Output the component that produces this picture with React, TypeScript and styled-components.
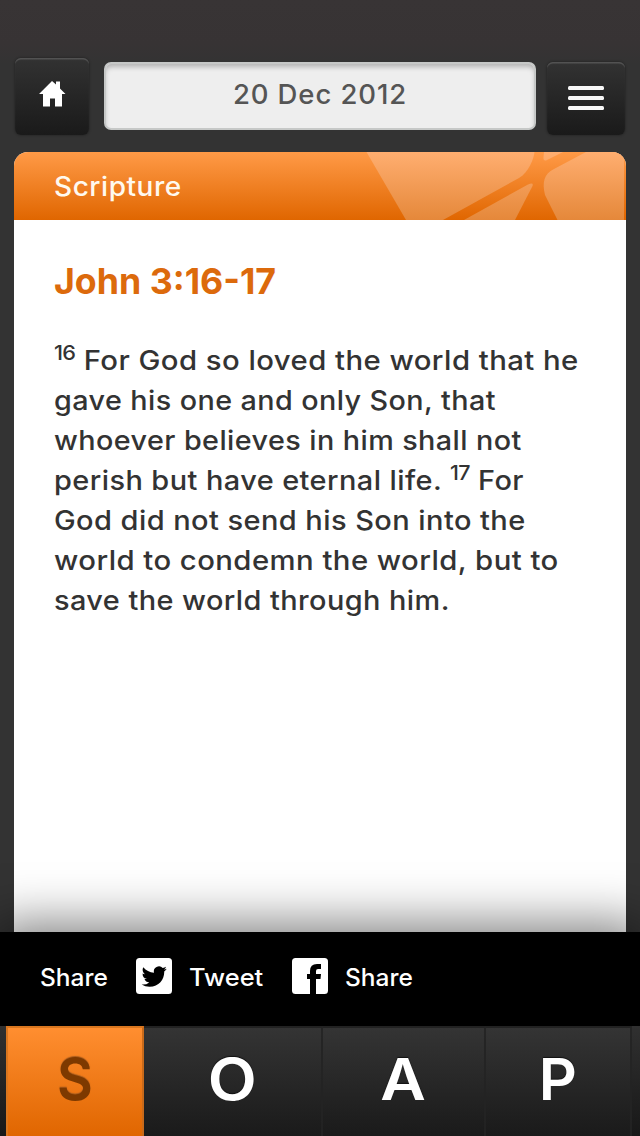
import React from "react";
import styled, { createGlobalStyle } from "styled-components";

const Global = createGlobalStyle`
  *, *::before, *::after { box-sizing: border-box; }
  body { margin: 0; background: #333; font-family: Inter, "Liberation Sans", sans-serif; }
`;

const Screen = styled.div`
  width: 640px;
  height: 1136px;
  display: flex;
  flex-direction: column;
  overflow: hidden;
  background: linear-gradient(#383435 0, #373334 44px, #333 64px);
`;

const TopBar = styled.header`
  flex: none;
  height: 152px;
  padding: 58px 15px 0;
  display: flex;
  align-items: flex-start;
`;

const DarkButton = styled.button<{ $w: number; $h: number; $top?: number; $lift: number }>`
  flex: none;
  width: ${(p) => p.$w}px;
  height: ${(p) => p.$h}px;
  margin: ${(p) => p.$top ?? 0}px 0 0;
  padding: 0 0 ${(p) => p.$lift}px;
  border: 0;
  border-radius: 6px;
  display: flex;
  align-items: center;
  justify-content: center;
  background: linear-gradient(#323232, #1a1a1a);
  box-shadow: inset 0 2px 1px -0.5px #555, 0 0 2px 1px rgba(0, 0, 0, 0.2);
`;

const DateField = styled.div`
  width: 432px;
  height: 68px;
  margin: 4px 11px 0 15px;
  border: 2px solid #c6c8c7;
  border-radius: 7px;
  background: #eee;
  box-shadow: inset 0 4px 5px -1px #b4b4b4;
  display: flex;
  justify-content: center;
  padding-top: 13px;
  line-height: 34px;
  font-size: 27.5px;
  font-weight: 550;
  color: #555;
`;

const Card = styled.main`
  flex: none;
  height: 780px;
  margin: 0 14px;
  border-radius: 14px 14px 0 0;
  background: #fff;
  overflow: hidden;
`;

const CardHeader = styled.div`
  height: 68px;
  display: flex;
  align-items: center;
  justify-content: space-between;
  padding-left: 40px;
  background: linear-gradient(#ff9a47, #e06600);
  color: #fff9ef;
  font-size: 26.5px;
  font-weight: 540;
`;

const Passage = styled.article`
  padding: 35px 20px 0 40px;
  color: #333;
`;

const Reference = styled.h1`
  margin: 0;
  height: 52px;
  line-height: 52px;
  font-size: 36px;
  font-weight: 700;
  color: #dc6a0c;
`;

const Verses = styled.p`
  margin: 34px 0 0;
  font-size: 27px;
  font-weight: 550;
  line-height: 40px;
`;

const Line = styled.span<{ $stretch: number }>`
  display: block;
  height: 40px;
  white-space: nowrap;
  letter-spacing: 0.4px;
  transform: scaleX(${(p) => p.$stretch});
  transform-origin: left center;
`;

const VerseNo = styled.sup`
  font-size: 20px;
  line-height: 0;
  vertical-align: 10px;
  letter-spacing: -0.6px;
`;

const Txt = styled.span<{ $ls?: number; $stretch?: number }>`
  display: inline-block;
  white-space: nowrap;
  letter-spacing: ${(p) => p.$ls ?? 0}px;
  transform: scaleX(${(p) => p.$stretch ?? 1});
  transform-origin: left center;
`;

const ShareBar = styled.section`
  flex: none;
  position: relative;
  height: 94px;
  padding: 0 40px 4px;
  display: flex;
  align-items: center;
  background: #000;
  color: #fff;
  box-shadow: 0 0 52px 8px rgba(0, 0, 0, 0.52);
  font-size: 24px;
  font-weight: 540;
`;

const ShareLabel = styled.span`
  width: 96px;
`;

const ShareLink = styled.a<{ $w: number }>`
  width: ${(p) => p.$w}px;
  display: flex;
  align-items: center;
  gap: 17px;
  color: #fff;
  svg { flex: none; margin-top: -2px; }
`;

const Tabs = styled.nav`
  flex: none;
  position: relative;
  height: 110px;
  padding: 0 8px 0 6px;
  display: flex;
  background: linear-gradient(#303030, #181818);
`;

const Tab = styled.div<{ $w: number; $active?: boolean }>`
  width: ${(p) => p.$w}px;
  display: flex;
  justify-content: center;
  padding-top: 16px;
  line-height: 70px;
  font-size: 58px;
  font-weight: 600;
  color: ${(p) => (p.$active ? "#7d3900" : "#fff")};
  background: ${(p) => (p.$active ? "linear-gradient(#ff8e30, #e06600)" : "linear-gradient(#343434, #1a1a1a)")};
  border-top: 2px solid ${(p) => (p.$active ? "#d9761f" : "#222")};
  border-right: 2px solid ${(p) => (p.$active ? "#c96a1a" : "rgba(36, 36, 36, 0.9)")};
  border-left: ${(p) => (p.$active ? "2px solid #d9761f" : "0")};
  text-shadow: ${(p) => (p.$active ? "0 -1px 1px #a65a1c" : "0 -1px 1px #111")};
`;

const Letter = styled.span<{ $stretch: number }>`
  transform: scaleX(${(p) => p.$stretch});
`;

const HomeIcon = () => (
  <svg width="28" height="28" viewBox="0 0 28 28">
    <path d="M14 1L18 4.500V1.500H22V8.500L27.500 14H24V26.500H17V18.500H12V26.500H5V14H1Z" fill="#fff" />
  </svg>
);

const MenuIcon = () => (
  <svg width="36" height="24" viewBox="0 0 36 24" fill="#f7f7f7">
    <rect width="36" height="4" rx="1.5" />
    <rect y="10" width="36" height="4" rx="1.5" />
    <rect y="20" width="36" height="4" rx="1.5" />
  </svg>
);

const Rays = () => (
  <svg width="260" height="68" viewBox="0 0 260 68">
    <defs>
      <linearGradient id="ray" x1="0" y1="0" x2="0" y2="68" gradientUnits="userSpaceOnUse">
        <stop offset="0" stopColor="#ffae70" />
        <stop offset="1" stopColor="#e5883a" />
      </linearGradient>
    </defs>
    <g fill="url(#ray)">
      <path d="M0.500 0H168.500C168 6 163 20 153 26L77 68H40Z" />
      <path d="M178 0H197L180 8.500Q177 9 177.500 5Z" />
      <path d="M98 68L162 32.500Q168 30 166.500 34L149 68Z" />
      <path d="M220 0H258V68H191.500L179 43C176 30 178 22 188 17Z" />
    </g>
  </svg>
);

const TweetIcon = () => (
  <svg width="36" height="36" viewBox="0 0 36 36">
    <rect width="36" height="36" rx="3.5" fill="#fff" />
    <path transform="translate(5.6 6) scale(1.05)" d="M23.95 4.57a10 10 0 0 1-2.82.77 4.96 4.96 0 0 0 2.16-2.72c-.95.55-2 .95-3.13 1.18a4.92 4.92 0 0 0-8.38 4.48C7.69 8.1 4.07 6.13 1.64 3.16a4.92 4.92 0 0 0 1.52 6.57 4.9 4.9 0 0 1-2.23-.61v.06a4.92 4.92 0 0 0 3.95 4.83 5 5 0 0 1-2.21.08 4.94 4.94 0 0 0 4.6 3.42A9.87 9.87 0 0 1 0 19.54a13.99 13.99 0 0 0 7.55 2.21c9.05 0 14-7.5 14-13.98 0-.21 0-.42-.02-.63a9.94 9.94 0 0 0 2.42-2.57z" />
  </svg>
);

const FacebookIcon = () => (
  <svg width="36" height="36" viewBox="0 0 36 36">
    <rect width="36" height="36" rx="3.5" fill="#fff" />
    <path d="M18 36V21H15V16H18V13Q18 6 25 6H29V11H26Q24 11 24 13V16H29L28.5 21H24V36Z" />
  </svg>
);

export default function App() {
  return (
    <Screen>
      <Global />
      <TopBar>
        <DarkButton $w={74} $h={77} $lift={6} aria-label="Home"><HomeIcon /></DarkButton>
        <DateField><Txt $ls={0.9}>20 Dec 2012</Txt></DateField>
        <DarkButton $w={78} $h={73} $top={4} $lift={1} aria-label="Menu"><MenuIcon /></DarkButton>
      </TopBar>
      <Card>
        <CardHeader><Txt $ls={0.5} $stretch={1.058}>Scripture</Txt><Rays /></CardHeader>
        <Passage>
          <Reference><Txt $stretch={0.992}>John 3:16-17</Txt></Reference>
          <Verses>
            <Line $stretch={1.086}><VerseNo>16</VerseNo> For God so loved the world that he</Line>
            <Line $stretch={1.064}>gave his one and only Son, that</Line>
            <Line $stretch={1.065}>whoever believes in him shall not</Line>
            <Line $stretch={1.071}>perish but have eternal life. <VerseNo>17</VerseNo> For</Line>
            <Line $stretch={1.074}>God did not send his Son into the</Line>
            <Line $stretch={1.086}>world to condemn the world, but to</Line>
            <Line $stretch={1.07}>save the world through him.</Line>
          </Verses>
        </Passage>
      </Card>
      <ShareBar>
        <ShareLabel><Txt $stretch={1.02}>Share</Txt></ShareLabel>
        <ShareLink $w={156}><TweetIcon /><Txt $stretch={1.06}>Tweet</Txt></ShareLink>
        <ShareLink $w={140}><FacebookIcon /><Txt $stretch={1.02}>Share</Txt></ShareLink>
      </ShareBar>
      <Tabs>
        <Tab $w={138} $active><Letter $stretch={0.95}>S</Letter></Tab>
        <Tab $w={179}><Letter $stretch={1.1}>O</Letter></Tab>
        <Tab $w={163}><Letter $stretch={1.08}>A</Letter></Tab>
        <Tab $w={146}><Letter $stretch={1.02}>P</Letter></Tab>
      </Tabs>
    </Screen>
  );
}
